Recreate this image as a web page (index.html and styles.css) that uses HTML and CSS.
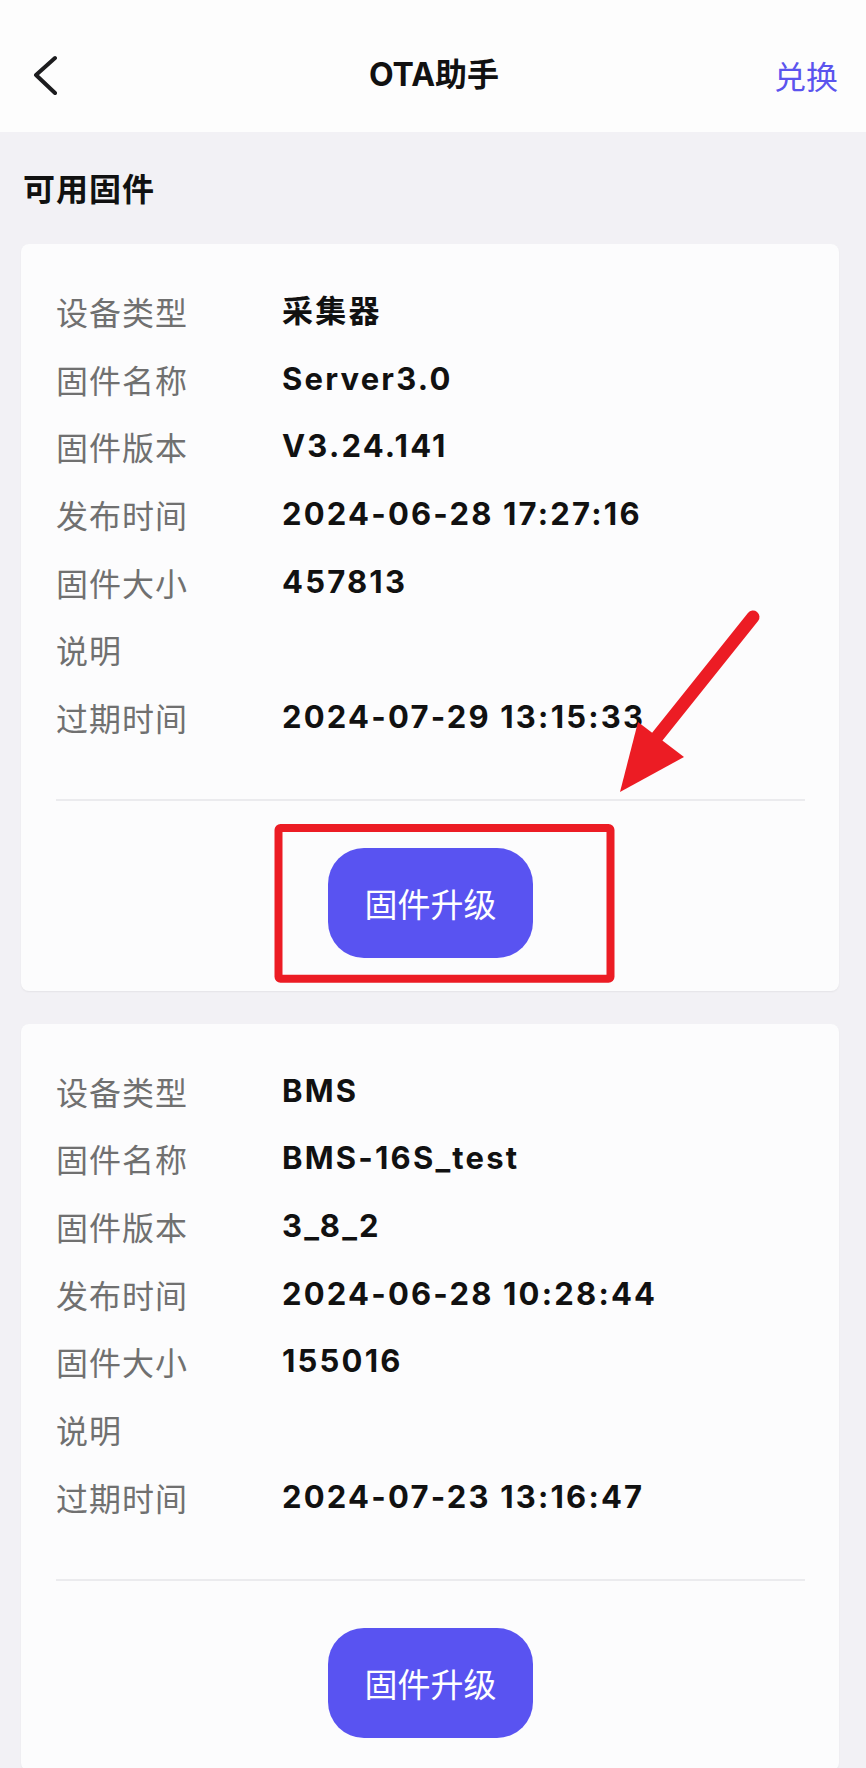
FILE: index.html
```html
<!DOCTYPE html>
<html lang="zh-CN">
<head>
<meta charset="utf-8">
<title>OTA助手</title>
<link rel="stylesheet" href="styles.css">
</head>
<body>
<header class="nav">
  <div class="nav-left">
    <svg class="back" width="30" height="40" viewBox="0 0 30 40"><path d="M25 3 L6 20 L25 38" fill="none" stroke="#1c1c1e" stroke-width="4" stroke-linecap="round" stroke-linejoin="round"/></svg>
  </div>
  <div class="nav-title">OTA助手</div>
  <div class="nav-right">兑换</div>
</header>

<main class="content">
  <h2 class="section-title">可用固件</h2>

  <section class="card">
    <div class="rows">
      <div class="row"><span class="label">设备类型</span><span class="value">采集器</span></div>
      <div class="row"><span class="label">固件名称</span><span class="value">Server3.0</span></div>
      <div class="row"><span class="label">固件版本</span><span class="value">V3.24.141</span></div>
      <div class="row"><span class="label">发布时间</span><span class="value">2024-06-28 17:27:16</span></div>
      <div class="row"><span class="label">固件大小</span><span class="value">457813</span></div>
      <div class="row"><span class="label">说明</span><span class="value"></span></div>
      <div class="row"><span class="label">过期时间</span><span class="value">2024-07-29 13:15:33</span></div>
    </div>
    <div class="divider"></div>
    <div class="actions"><button class="btn">固件升级</button></div>
  </section>

  <section class="card">
    <div class="rows">
      <div class="row"><span class="label">设备类型</span><span class="value">BMS</span></div>
      <div class="row"><span class="label">固件名称</span><span class="value">BMS-16S_test</span></div>
      <div class="row"><span class="label">固件版本</span><span class="value">3_8_2</span></div>
      <div class="row"><span class="label">发布时间</span><span class="value">2024-06-28 10:28:44</span></div>
      <div class="row"><span class="label">固件大小</span><span class="value">155016</span></div>
      <div class="row"><span class="label">说明</span><span class="value"></span></div>
      <div class="row"><span class="label">过期时间</span><span class="value">2024-07-23 13:16:47</span></div>
    </div>
    <div class="divider"></div>
    <div class="actions"><button class="btn">固件升级</button></div>
  </section>
</main>

<svg class="annotation" width="866" height="1768" viewBox="0 0 866 1768">
  <rect x="278.5" y="828" width="332" height="150.7" rx="2" fill="none" stroke="#ec1c24" stroke-width="8"/>
  <line x1="753" y1="617" x2="657" y2="737" stroke="#ec1c24" stroke-width="13" stroke-linecap="round"/>
  <polygon points="620,792 638,722 684,757" fill="#ec1c24"/>
</svg>
</body>
</html>
```

FILE: styles.css
```css
* { box-sizing: border-box; }

html, body {
  margin: 0;
  padding: 0;
}

body {
  position: relative;
  width: 866px;
  min-height: 1768px;
  background: #f2f1f5;
  font-family: "Noto Sans CJK SC", "Noto Sans", sans-serif;
  color: #111;
  overflow: hidden;
}

.nav {
  height: 132px;
  background: #fdfdfd;
  display: grid;
  grid-template-columns: 1fr auto 1fr;
  align-items: center;
  padding: 18px 28px 0 30px;
}

.nav-left {
  display: flex;
  align-items: center;
}

.back { display: block; }

.nav-title {
  font-family: "Inter", "Noto Sans CJK SC", sans-serif;
  font-weight: 700;
  font-size: 32px;
  color: #111;
  line-height: 40px;
}

.nav-right {
  justify-self: end;
  font-size: 32px;
  color: #5b54ee;
  line-height: 40px;
}

.content {
  padding: 0 27px 0 21px;
}

.section-title {
  margin: 0;
  padding: 35px 0 37px 2px;
  font-size: 32px;
  letter-spacing: 1px;
  line-height: 40px;
  font-weight: 700;
  color: #111;
}

.card {
  background: #fcfcfd;
  border-radius: 8px;
  box-shadow: 0 1px 2px rgba(0, 0, 0, 0.06);
  padding: 33px 34px 33px 35px;
  margin-bottom: 33px;
}

.rows {
  display: flex;
  flex-direction: column;
}

.row {
  display: flex;
  align-items: center;
  height: 67.7px;
}

.label {
  width: 226px;
  flex: none;
  font-size: 32px;
  letter-spacing: 1px;
  color: #707070;
  line-height: 40px;
}

.value {
  font-family: "Inter", "Noto Sans CJK SC", sans-serif;
  font-weight: 700;
  font-size: 31px;
  letter-spacing: 2.2px;
  color: #111;
  line-height: 40px;
}

.divider {
  height: 2px;
  background: #ebebee;
  margin-top: 48px;
}

.actions {
  display: flex;
  justify-content: center;
  padding-top: 47px;
}

.btn {
  width: 205px;
  height: 110px;
  border: none;
  border-radius: 36px;
  background: #5953f1;
  color: #fff;
  font-family: "Noto Sans CJK SC", sans-serif;
  font-size: 33px;
  font-weight: 400;
}

.annotation {
  position: absolute;
  top: 0;
  left: 0;
  pointer-events: none;
}
```
